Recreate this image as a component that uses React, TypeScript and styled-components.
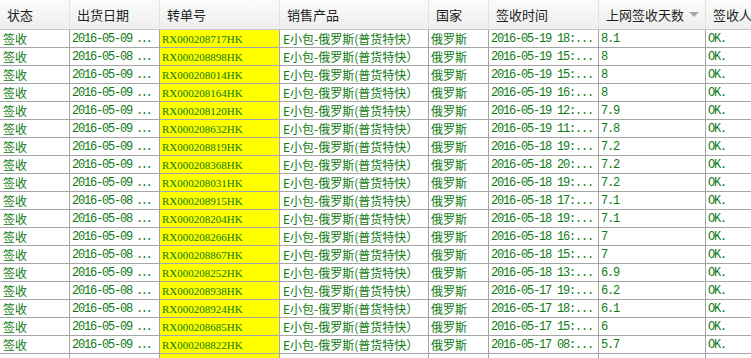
import styled, { createGlobalStyle } from "styled-components";

const GlobalStyle = createGlobalStyle`
  html, body {
    margin: 0;
    padding: 0;
    background: #ffffff;
    overflow: hidden;
  }
`;

const COLS = "70px 90px 120px 149px 60px 110px 107px 80px";

const rows = [
  ["2016-05-09", "RX000208717HK", "2016-05-19 18:", "8.1"],
  ["2016-05-08", "RX000208898HK", "2016-05-19 15:", "8"],
  ["2016-05-09", "RX000208014HK", "2016-05-19 15:", "8"],
  ["2016-05-09", "RX000208164HK", "2016-05-19 16:", "8"],
  ["2016-05-09", "RX000208120HK", "2016-05-19 12:", "7.9"],
  ["2016-05-09", "RX000208632HK", "2016-05-19 11:", "7.8"],
  ["2016-05-09", "RX000208819HK", "2016-05-18 19:", "7.2"],
  ["2016-05-09", "RX000208368HK", "2016-05-18 20:", "7.2"],
  ["2016-05-09", "RX000208031HK", "2016-05-18 19:", "7.2"],
  ["2016-05-08", "RX000208915HK", "2016-05-18 17:", "7.1"],
  ["2016-05-08", "RX000208204HK", "2016-05-18 19:", "7.1"],
  ["2016-05-09", "RX000208266HK", "2016-05-18 16:", "7"],
  ["2016-05-08", "RX000208867HK", "2016-05-18 15:", "7"],
  ["2016-05-09", "RX000208252HK", "2016-05-18 13:", "6.9"],
  ["2016-05-08", "RX000208938HK", "2016-05-17 19:", "6.2"],
  ["2016-05-08", "RX000208924HK", "2016-05-17 18:", "6.1"],
  ["2016-05-09", "RX000208685HK", "2016-05-17 15:", "6"],
  ["2016-05-09", "RX000208822HK", "2016-05-17 08:", "5.7"],
];

const headers = ["状态", "出货日期", "转单号", "销售产品", "国家", "签收时间", "上网签收天数", "签收人"];

const Grid = styled.div`
  width: 786px;
  font-family: "Noto Sans CJK SC", "Noto Sans", sans-serif;
`;

const HeaderRow = styled.div`
  display: grid;
  grid-template-columns: ${COLS};
  height: 30px;
  background: linear-gradient(#fbfbfb, #eeeeee);
  border-bottom: 1px solid #c8c8c8;
  box-sizing: border-box;
`;

const HeadCell = styled.div`
  position: relative;
  display: flex;
  align-items: center;
  padding-left: 7px;
  font-size: 13px;
  color: #1e1e1e;
  border-right: 1px solid #e2e2e2;
`;

const SortArrow = styled.span`
  position: absolute;
  right: 6px;
  top: 12px;
  width: 0;
  height: 0;
  border-left: 5px solid transparent;
  border-right: 5px solid transparent;
  border-top: 5px solid #a8a8a8;
`;

const Row = styled.div`
  display: grid;
  grid-template-columns: ${COLS};
  height: 18px;
  border-bottom: 1px solid #a6a6a6;
  box-sizing: border-box;
`;

const Cell = styled.div<{ $mono?: boolean; $code?: boolean; $pad?: number }>`
  display: flex;
  align-items: center;
  padding-left: ${(p) => p.$pad ?? 2}px;
  border-right: 1px solid #a6a6a6;
  white-space: nowrap;
  overflow: hidden;
  color: #0e7a12;
  background: ${(p) => (p.$code ? "#ffff00" : "transparent")};
  font-size: ${(p) => (p.$code ? "11px" : "12px")};
  font-family: ${(p) =>
    p.$code
      ? '"Liberation Serif", serif'
      : p.$mono
      ? '"Liberation Mono", monospace'
      : '"Noto Sans CJK SC", "Noto Sans", sans-serif'};
  letter-spacing: ${(p) => (p.$mono ? "-1.2px" : "0")};
`;

const Dots = styled.span`
  margin-left: 4px;
  letter-spacing: -2.5px;
`;

export default function App() {
  return (
    <>
      <GlobalStyle />
      <Grid>
        <HeaderRow>
          {headers.map((h, i) => (
            <HeadCell key={h}>
              {h}
              {i === 6 && <SortArrow />}
            </HeadCell>
          ))}
        </HeaderRow>
        {rows.map((r) => (
          <Row key={r[1]}>
            <Cell $pad={3}>签收</Cell>
            <Cell $mono>
              {r[0]}
              <Dots>...</Dots>
            </Cell>
            <Cell $code>{r[1]}</Cell>
            <Cell $pad={3}>E小包-俄罗斯(普货特快）</Cell>
            <Cell>俄罗斯</Cell>
            <Cell $mono>{r[2]}...</Cell>
            <Cell $mono>{r[3]}</Cell>
            <Cell $mono>OK.</Cell>
          </Row>
        ))}
        <Row>
          <Cell />
          <Cell />
          <Cell $code />
          <Cell />
          <Cell />
          <Cell />
          <Cell />
          <Cell />
        </Row>
      </Grid>
    </>
  );
}
